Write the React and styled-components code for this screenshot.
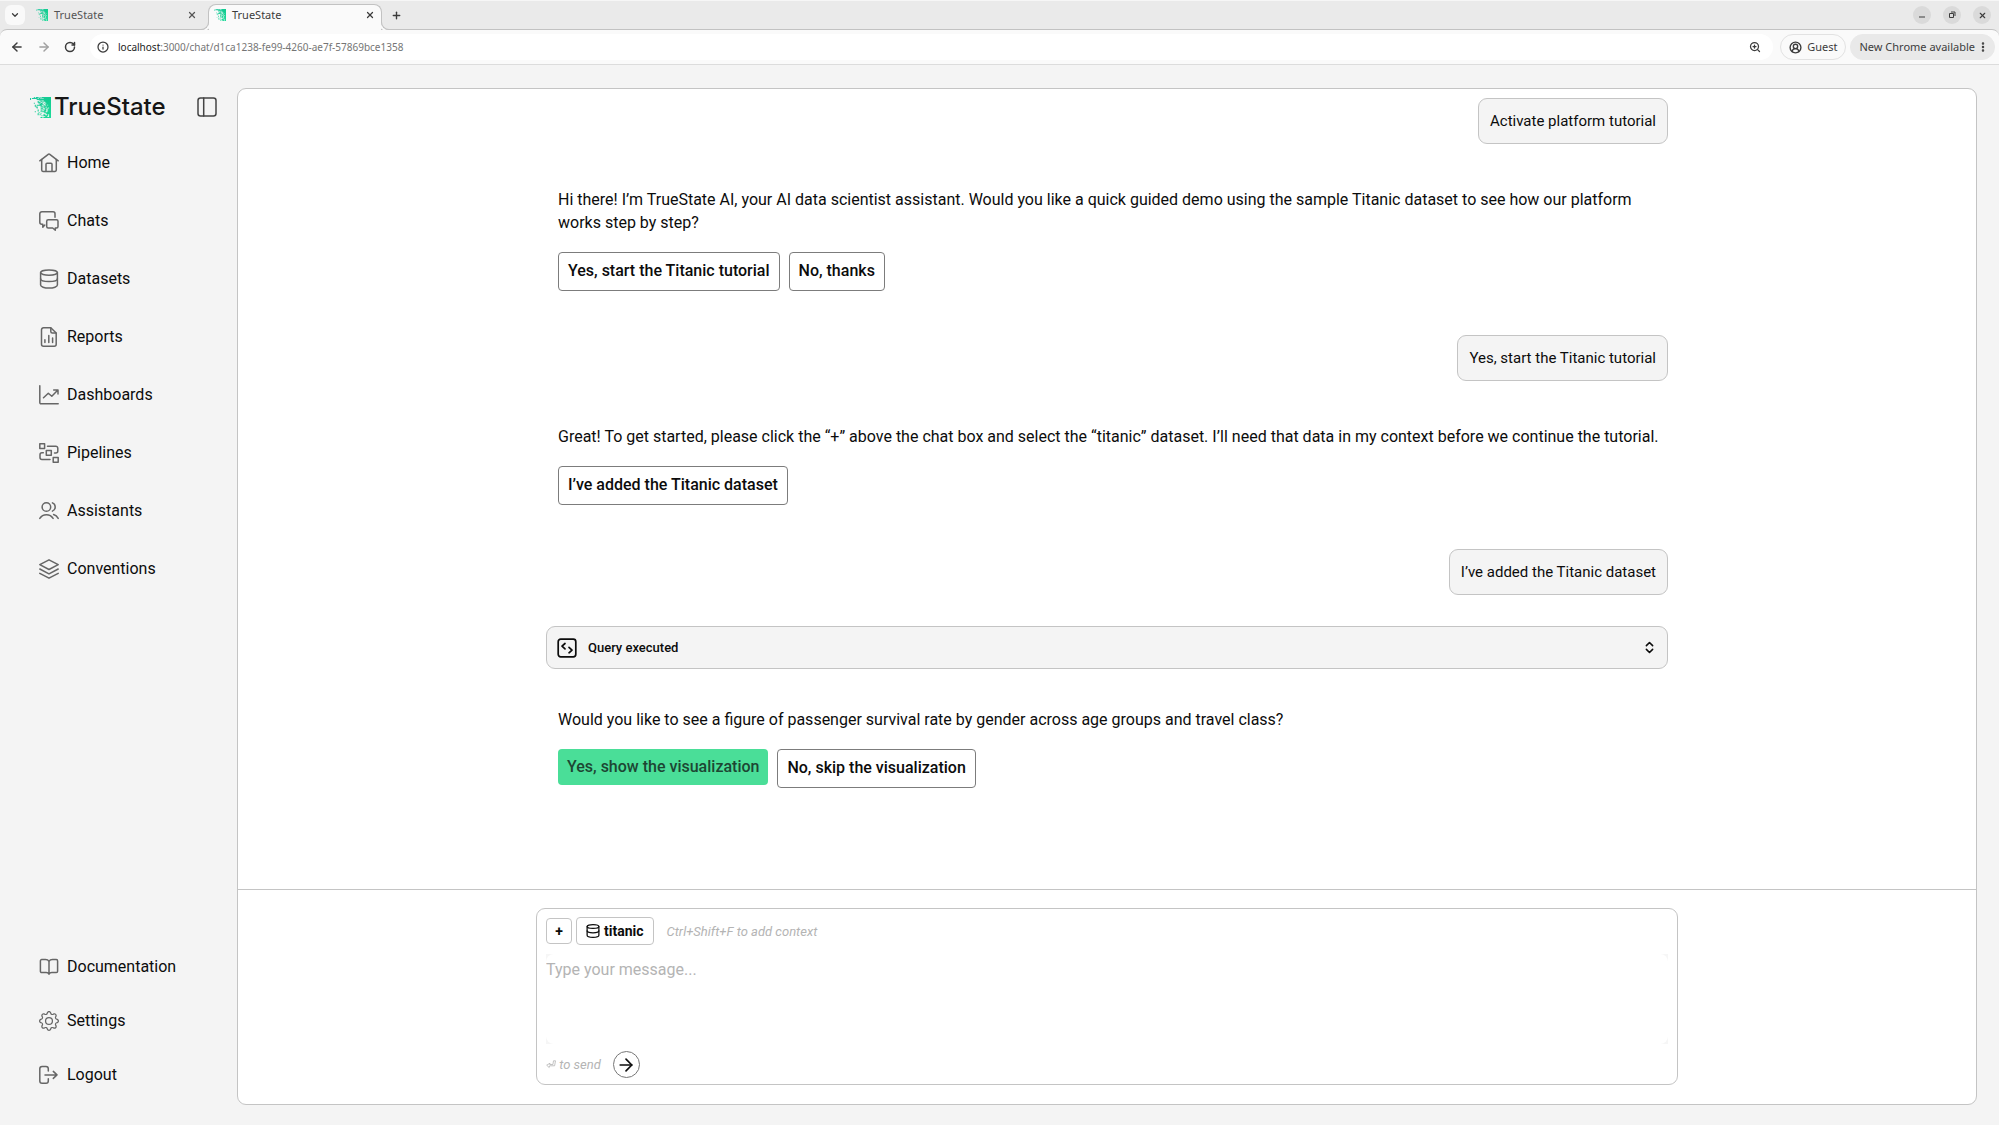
import React, { useState } from 'react'
import styled, { createGlobalStyle, css } from 'styled-components'
import {
  ArrowLeft,
  ArrowRight,
  ChevronDown,
  ChevronsUpDown,
  CircleUserRound,
  EllipsisVertical,
  Info,
  Plus,
  RotateCw,
  X,
  ZoomIn,
} from 'lucide-react'
import { BsGear } from 'react-icons/bs'

const GlobalStyle = createGlobalStyle`
  :root {
    --page: #f4f4f4;
    --panel: #fff;
    --line: #c4c4c4;
    --line-dark: #7c7c7c;
    --icon: #666;
    --muted: #b4b4b4;
    --green: #4ade98;
    --chrome: #eaeaea;
    --toolbar: #fafafa;
  }
  * {
    box-sizing: border-box;
  }
  body {
    margin: 0;
    background: var(--page);
    color: #0c0c0c;
    font-family: Roboto, 'Liberation Sans', sans-serif;
    font-size: 16px;
  }
  button,
  textarea,
  input {
    font: inherit;
    color: inherit;
  }
  button {
    cursor: pointer;
  }
`

const Screen = styled.div`
  min-height: 100vh;
  display: flex;
  flex-direction: column;
`

/* browser frame */

const Browser = styled.header`
  background: var(--chrome);
  border-top: 1px solid #f6f6f6;
  font-family: 'Noto Sans', 'Open Sans', sans-serif;
  color: #3c3c3c;
`

const TabStrip = styled.div`
  display: flex;
  align-items: flex-end;
  height: 28px;
  padding: 0 8px 0 5px;
`

const Plain = styled.button`
  display: flex;
  align-items: center;
  justify-content: center;
  flex: none;
  padding: 0;
  border: 0;
  background: none;
  &:disabled {
    color: #a0a0a0;
  }
`

const TabMenu = styled(Plain)`
  width: 20px;
  height: 20px;
  margin: 0 5px 4px 0;
  border-radius: 6px;
  background: #f9f9f9;
`

const Tab = styled.div`
  position: relative;
  display: flex;
  align-items: center;
  gap: 6px;
  width: 174px;
  height: 26px;
  padding: 0 6px 4px 5px;
  font-size: 11px;
  line-height: 16px;
  color: #555;
  border: 1px solid transparent;
  border-bottom: 0;
  ${Plain} {
    margin-left: auto;
  }
  ${props =>
    props.$active &&
    css`
      z-index: 1;
      margin: 0 0 -1px 4px;
      padding-bottom: 5px;
      background: var(--toolbar);
      border-color: #c2c2c2;
      border-radius: 8px 8px 0 0;
      color: #3c3c3c;
      &:before,
      &:after {
        content: '';
        position: absolute;
        bottom: 0;
        width: 8px;
        height: 8px;
        border: 0 solid #c2c2c2;
        border-bottom-width: 1px;
      }
      &:before {
        right: 100%;
        border-right-width: 1px;
        border-bottom-right-radius: 8px;
        box-shadow: 2px 1px 0 var(--toolbar);
      }
      &:after {
        left: 100%;
        border-left-width: 1px;
        border-bottom-left-radius: 8px;
        box-shadow: -2px 1px 0 var(--toolbar);
      }
    `}
`

const NewTab = styled(Plain)`
  margin: 0 0 8px 9px;
`

const WindowButtons = styled.div`
  display: flex;
  gap: 12px;
  margin: 0 0 5px auto;
  ${Plain} {
    width: 18px;
    height: 18px;
    border-radius: 50%;
    background: #dadada;
  }
`

const Toolbar = styled.div`
  display: flex;
  align-items: center;
  height: 36px;
  padding: 0 4px 0 10px;
  background: var(--toolbar);
  border: solid #c2c2c2;
  border-width: 1px 0 1px;
  border-bottom-color: #dcdcdc;
  border-radius: 7px 7px 0 0;
`

const History = styled.div`
  display: flex;
  gap: 13px;
  margin-right: 14px;
`

const AddressBar = styled.div`
  flex: 1;
  display: flex;
  align-items: center;
  height: 26px;
  margin-right: 7px;
  padding: 0 12px 0 7px;
  border-radius: 13px;
  background: #fff;
`

const Address = styled.p`
  flex: 1;
  margin: 0 0 0 9px;
  font-size: 10px;
  line-height: 16px;
  color: #757575;
  b {
    font-weight: 400;
    color: #1c1c1c;
  }
`

const Pill = styled.button`
  display: flex;
  align-items: center;
  gap: 5px;
  height: 26px;
  padding: 0 8px;
  border: 1px solid #e2e2e2;
  border-radius: 13px;
  background: transparent;
  font-size: 11px;
  line-height: 16px;
  ${props =>
    props.$filled &&
    css`
      gap: 2px;
      margin-left: 4px;
      padding-right: 5px;
      border-color: #e9e9e9;
      background: #e9e9e9;
    `}
`

/* sidebar */

const Body = styled.div`
  flex: 1;
  display: flex;
  padding: 23px 22px 20px 0;
`

const Sidebar = styled.aside`
  display: flex;
  flex-direction: column;
  flex: none;
  width: 237px;
  padding: 7px 20px 3px 30px;
`

const Brand = styled.div`
  display: flex;
  align-items: center;
  gap: 3px;
  height: 24px;
  font-family: Inter, 'Liberation Sans', sans-serif;
  font-size: 24px;
  font-weight: 500;
  line-height: 24px;
  color: #161616;
  ${Plain} {
    margin-left: auto;
    color: #444;
  }
`

const Nav = styled.nav`
  display: flex;
  flex-direction: column;
  margin-top: ${props => (props.$bottom ? 'auto' : '15px')};
`

const NavLink = styled.a`
  display: flex;
  align-items: center;
  gap: 8px;
  height: ${props => (props.$compact ? 54 : 58)}px;
  padding-left: 9px;
  line-height: 24px;
  color: inherit;
  text-decoration: none;
  svg {
    color: var(--icon);
  }
`

/* chat */

const Panel = styled.main`
  flex: 1;
  min-width: 0;
  display: flex;
  flex-direction: column;
  background: var(--panel);
  border: 1px solid var(--line);
  border-radius: 9px;
`

const Messages = styled.section`
  flex: 1;
  display: flex;
  flex-direction: column;
  width: 100%;
  max-width: 1122px;
  margin: 0 auto;
  padding: 9px 0;
`

const Bubble = styled.p`
  align-self: flex-end;
  margin: 0;
  padding: 11px;
  border: 1px solid var(--line);
  border-radius: 9px;
  background: var(--page);
  font-size: 15px;
  line-height: 22px;
`

const Reply = styled.div`
  padding: 44px 0 44px 12px;
  p {
    margin: 0 0 18px;
    line-height: 23px;
  }
`

const Choices = styled.div`
  display: flex;
  align-items: flex-start;
  gap: 9px;
`

const Choice = styled.button`
  padding: 6px 9px 8px;
  border: 1px solid var(--line-dark);
  border-radius: 4px;
  background: var(--panel);
  font-weight: 500;
  line-height: 23px;
  ${props =>
    props.$primary &&
    css`
      padding: 6px 9px 7px;
      border: 0;
      background: var(--green);
      color: #1d4633;
    `}
`

const QueryBar = styled.button`
  display: flex;
  align-items: center;
  gap: 11px;
  height: 43px;
  margin: 31px 0 -5px;
  padding: 0 10px;
  border: 1px solid var(--line);
  border-radius: 9px;
  background: var(--page);
  font-size: 13px;
  font-weight: 500;
  text-align: left;
  span {
    flex: 1;
  }
`

const Footer = styled.footer`
  padding: 18px 0 19px;
  border-top: 1px solid var(--line);
`

const Composer = styled.form`
  width: 100%;
  max-width: 1142px;
  margin: 0 auto;
  padding: 8px 9px 6px;
  border: 1px solid var(--line);
  border-radius: 9px;
`

const ContextRow = styled.div`
  display: flex;
  align-items: center;
  gap: 4px;
`

const Chip = styled.button`
  display: flex;
  align-items: center;
  justify-content: center;
  gap: 4px;
  min-width: 26px;
  height: ${props => (props.$wide ? 28 : 26)}px;
  padding: 0 ${props => (props.$wide ? 9 : 0)}px;
  border: 1px solid var(--line);
  border-radius: 4px;
  background: var(--panel);
  font-size: 14px;
  font-weight: 700;
`

const Hint = styled.span`
  margin-left: ${props => (props.$indent ? 9 : 0)}px;
  font-size: 13px;
  font-style: italic;
  color: var(--muted);
`

const InputWell = styled.div`
  margin-top: 9px;
  background: #f6f6f6;
  textarea {
    display: block;
    width: 100%;
    height: 90px;
    padding: 4px 0;
    border: 0;
    border-radius: 8px;
    outline: 0;
    resize: none;
    background: var(--panel);
    line-height: 24px;
  }
  textarea::placeholder {
    color: var(--muted);
    opacity: 1;
  }
`

const SendRow = styled.div`
  display: flex;
  align-items: center;
  gap: 12px;
  margin-top: 7px;
`

const Send = styled(Plain)`
  width: 27px;
  height: 27px;
  border: 1px solid #777;
  border-radius: 50%;
`

/* drawings */

const Glyph = ({ size = 20, children, stroke = 1.5 }) => (
  <svg
    width={size}
    height={size}
    viewBox="0 0 20 20"
    fill="none"
    stroke="currentColor"
    strokeWidth={stroke}
    strokeLinecap="round"
    strokeLinejoin="round"
    aria-hidden="true"
  >
    {children}
  </svg>
)

const HomeIcon = () => (
  <Glyph>
    <path d="M.8 7.8 9.2 1.4a1.3 1.3 0 0 1 1.6 0l8.4 6.4" />
    <path d="M2.7 6.6V17A1.4 1.4 0 0 0 4 18.4h12a1.4 1.4 0 0 0 1.3-1.4V6.6" />
    <path d="M7 18.2v-7a1 1 0 0 1 1-1h4a1 1 0 0 1 1 1v7" />
  </Glyph>
)

const ChatsIcon = () => (
  <Glyph>
    <path d="M16 6.200V2.800a2 2 0 0 0-2-2H2.800a2 2 0 0 0-2 2v8.500a2 2 0 0 0 2 2h1v3l2-2.200" />
    <path d="M9.200 8.700h8.300A1.500 1.500 0 0 1 19 10.200v5.300a1.500 1.500 0 0 1-1.500 1.500h-1.200v2.200L13.700 17H9.200a1.500 1.500 0 0 1-1.500-1.500v-5.300a1.500 1.500 0 0 1 1.500-1.500Z" />
  </Glyph>
)

const DatabaseIcon = ({ size, stroke }) => (
  <Glyph size={size} stroke={stroke}>
    <ellipse cx="10" cy="3.6" rx="8.4" ry="2.7" />
    <path d="M1.600 3.600v12.500c0 1.600 3.700 3 8.400 3s8.400-1.400 8.400-3V3.600" />
    <path d="M1.600 9.800c0 1.600 3.700 2.800 8.400 2.800s8.400-1.200 8.400-2.800" />
  </Glyph>
)

const ReportsIcon = () => (
  <Glyph>
    <path d="M11.8.8H4.500a2 2 0 0 0-2 2v14.400a2 2 0 0 0 2 2h10.700a2 2 0 0 0 2-2V6Z" />
    <path d="M11.8 1v3.500A1.500 1.500 0 0 0 13.300 6H17" />
    <path d="M5.900 12.800v2.800M9.800 8.600v7M13.600 11v4.600" />
  </Glyph>
)

const DashboardsIcon = () => (
  <Glyph>
    <path d="M.8.8v16.800A1.200 1.200 0 0 0 2 18.800h17.200" />
    <path d="m4.500 12.800 4.800-4.600 3.500 3L18.900 5M14.700 5H19v4" />
  </Glyph>
)

const PipelinesIcon = () => (
  <Glyph>
    <rect x=".8" y=".8" width="4.800" height="4.800" />
    <rect x="7.300" y="7.400" width="5" height="4.800" />
    <rect x="14.200" y="14.400" width="5" height="4.800" />
    <path d="M8.500 3.200h8.300a2 2 0 0 1 2 2V8a2 2 0 0 1-2 2h-1.300" />
    <path d="M4.300 9.800H3a2 2 0 0 0-2 2v2.800a2 2 0 0 0 2 2h8" />
  </Glyph>
)

const AssistantsIcon = () => (
  <Glyph>
    <circle cx="7.400" cy="6" r="4.300" />
    <path d="M13.400 1.900a4.400 4.400 0 0 1 0 8.200" />
    <path d="M.8 17.400c3-5 10.300-5 13.300 0M14.600 13.600c2 .5 3.500 1.700 4.600 3.800" />
  </Glyph>
)

const ConventionsIcon = () => (
  <Glyph>
    <path d="m10 .8 9.200 4.800-9.200 4.900L.8 5.600Z" />
    <path d="m.8 10 9.200 4.900 9.200-4.900M.8 14.400l9.200 4.800 9.200-4.800" />
  </Glyph>
)

const BookIcon = () => (
  <Glyph>
    <path d="M10 4.300C9.200 3 7.800 2.600 6.500 2.600H2.700a1.300 1.300 0 0 0-1.300 1.300v10.400a1.300 1.300 0 0 0 1.300 1.300h4.500c1.500 0 2.300.5 2.800 1.600.5-1.100 1.300-1.600 2.800-1.600h4.500a1.300 1.300 0 0 0 1.300-1.300V3.900a1.300 1.300 0 0 0-1.300-1.300h-3.800c-1.300 0-2.700.4-3.500 1.700Zm0 0v13" />
  </Glyph>
)

const LogoutIcon = () => (
  <Glyph>
    <path d="M9.300 6V3.700A2.300 2.300 0 0 0 7 1.400H3.100A2.300 2.300 0 0 0 .8 3.700v12.200a2.300 2.300 0 0 0 2.300 2.300H7a2.300 2.300 0 0 0 2.300-2.300v-2.100" />
    <path d="M6 9.900h12M14.300 6.400 18 9.900l-3.700 3.500" />
  </Glyph>
)

const GearIcon = () => <BsGear size={20} />

const SidebarIcon = () => (
  <Glyph>
    <rect x="1" y="1" width="18" height="18" rx="2.500" />
    <path d="M6.700 1v18" />
  </Glyph>
)

const CodeIcon = () => (
  <Glyph stroke={1.7}>
    <rect x="1.200" y="1.200" width="17.600" height="17.600" rx="2.500" />
    <path d="M8 5.500 5 8.200l3 2.700M12 9.300l3 2.800-3 2.700" />
  </Glyph>
)

const ReturnIcon = () => (
  <svg width="10" height="9" viewBox="0 0 10 9" fill="none" stroke="currentColor">
    <path
      d="M7.500.8h2L8.600 5.800h-5l-.4 1.700L.7 5.200l3.300-2-.3 1.300h3.200Z"
      strokeWidth=".8"
    />
  </svg>
)

// integer hash, so the specks fall the same way every time
const noise = (x, y) => {
  let n = Math.imul(x + 17, 374761393) + Math.imul(y + 5, 668265263)
  n = Math.imul(n ^ (n >>> 13), 1274126177)
  return ((n ^ (n >>> 16)) >>> 0) / 4294967296
}

// green square that breaks into specks towards the lower left
const specks = []
for (let y = 0; y < 22; y++) {
  for (let x = 0; x < 22; x++) {
    const density = x > 19 ? 1 : x / 19 - y / 60 + (y < 3 ? 0.15 : 0.02)
    if (noise(x, y) < density) specks.push([x, y])
  }
}

const Mark = ({ size }) => (
  <svg width={size} height={size} viewBox="0 0 22 22" aria-hidden="true">
    <defs>
      <linearGradient id={`mark${size}`} x1="0" y1="0" x2="1" y2="1">
        <stop offset="0" stopColor="#22c9a4" />
        <stop offset=".5" stopColor="#12cc90" />
        <stop offset="1" stopColor="#1edc9a" />
      </linearGradient>
    </defs>
    <path
      fill={`url(#mark${size})`}
      d={specks.map(([x, y]) => `M${x} ${y}h1.1v1.1h-1.1z`).join('')}
    />
  </svg>
)

const mainLinks = [
  ['Home', HomeIcon],
  ['Chats', ChatsIcon],
  ['Datasets', DatabaseIcon],
  ['Reports', ReportsIcon],
  ['Dashboards', DashboardsIcon],
  ['Pipelines', PipelinesIcon],
  ['Assistants', AssistantsIcon],
  ['Conventions', ConventionsIcon],
]

const bottomLinks = [
  ['Documentation', BookIcon],
  ['Settings', GearIcon],
  ['Logout', LogoutIcon],
]

const BrowserFrame = () => (
  <Browser>
    <TabStrip>
      <TabMenu aria-label="Search tabs">
        <ChevronDown size={10} strokeWidth={3} />
      </TabMenu>
      <Tab>
        <Mark size={12} />
        TrueState
        <Plain aria-label="Close tab">
          <X size={10} strokeWidth={3} />
        </Plain>
      </Tab>
      <Tab $active>
        <Mark size={12} />
        TrueState
        <Plain aria-label="Close tab">
          <X size={10} strokeWidth={3} />
        </Plain>
      </Tab>
      <NewTab aria-label="New tab">
        <Plus size={11} strokeWidth={3} />
      </NewTab>
      <WindowButtons>
        <Plain aria-label="Minimize">
          <svg width="8" height="8" viewBox="0 0 8 8" stroke="currentColor">
            <path d="M1 6h6" />
          </svg>
        </Plain>
        <Plain aria-label="Restore">
          <svg width="8" height="8" viewBox="0 0 8 8" fill="none" stroke="currentColor">
            <path d="M1.500 2.500h4v4h-4zM3 1h4v4" />
          </svg>
        </Plain>
        <Plain aria-label="Close window">
          <X size={9} strokeWidth={3} />
        </Plain>
      </WindowButtons>
    </TabStrip>
    <Toolbar>
      <History>
        <Plain aria-label="Back">
          <ArrowLeft size={14} strokeWidth={2.5} />
        </Plain>
        <Plain aria-label="Forward" disabled>
          <ArrowRight size={14} strokeWidth={2.5} />
        </Plain>
        <Plain aria-label="Reload">
          <RotateCw size={12} strokeWidth={3} />
        </Plain>
      </History>
      <AddressBar>
        <Info size={12} strokeWidth={2.5} />
        <Address>
          <b>localhost</b>:3000/chat/d1ca1238-fe99-4260-ae7f-57869bce1358
        </Address>
        <Plain aria-label="Zoom">
          <ZoomIn size={12} strokeWidth={2.5} />
        </Plain>
      </AddressBar>
      <Pill>
        <CircleUserRound size={13} strokeWidth={2.5} />
        Guest
      </Pill>
      <Pill $filled>
        New Chrome available
        <EllipsisVertical size={12} strokeWidth={3} />
      </Pill>
    </Toolbar>
  </Browser>
)

const SideNav = () => (
  <Sidebar>
    <Brand>
      <Mark size={21} />
      TrueState
      <Plain aria-label="Toggle sidebar">
        <SidebarIcon />
      </Plain>
    </Brand>
    <Nav>
      {mainLinks.map(([label, Icon]) => (
        <NavLink key={label} href="#">
          <Icon />
          {label}
        </NavLink>
      ))}
    </Nav>
    <Nav $bottom>
      {bottomLinks.map(([label, Icon]) => (
        <NavLink key={label} href="#" $compact>
          <Icon />
          {label}
        </NavLink>
      ))}
    </Nav>
  </Sidebar>
)

export default function App() {
  const [message, setMessage] = useState('')

  return (
    <>
      <GlobalStyle />
      <Screen>
        <BrowserFrame />
        <Body>
          <SideNav />
          <Panel>
            <Messages>
              <Bubble>Activate platform tutorial</Bubble>
              <Reply>
                <p>
                  Hi there! I’m TrueState AI, your AI data scientist assistant. Would you
                  like a quick guided demo using the sample Titanic dataset to see how our
                  platform works step by step?
                </p>
                <Choices>
                  <Choice>Yes, start the Titanic tutorial</Choice>
                  <Choice>No, thanks</Choice>
                </Choices>
              </Reply>
              <Bubble>Yes, start the Titanic tutorial</Bubble>
              <Reply>
                <p>
                  Great! To get started, please click the “+” above the chat box and select
                  the “titanic” dataset. I’ll need that data in my context before we
                  continue the tutorial.
                </p>
                <Choices>
                  <Choice>I’ve added the Titanic dataset</Choice>
                </Choices>
              </Reply>
              <Bubble>I’ve added the Titanic dataset</Bubble>
              <QueryBar>
                <CodeIcon />
                <span>Query executed</span>
                <ChevronsUpDown size={15} strokeWidth={2.5} />
              </QueryBar>
              <Reply>
                <p>
                  Would you like to see a figure of passenger survival rate by gender
                  across age groups and travel class?
                </p>
                <Choices>
                  <Choice $primary>Yes, show the visualization</Choice>
                  <Choice>No, skip the visualization</Choice>
                </Choices>
              </Reply>
            </Messages>
            <Footer>
              <Composer onSubmit={e => e.preventDefault()}>
                <ContextRow>
                  <Chip type="button" aria-label="Add context">
                    +
                  </Chip>
                  <Chip type="button" $wide>
                    <DatabaseIcon size={14} stroke={1.8} />
                    titanic
                  </Chip>
                  <Hint $indent>Ctrl+Shift+F to add context</Hint>
                </ContextRow>
                <InputWell>
                  <textarea
                    aria-label="Message"
                    placeholder="Type your message..."
                    value={message}
                    onChange={e => setMessage(e.target.value)}
                  />
                </InputWell>
                <SendRow>
                  <Hint>
                    <ReturnIcon /> to send
                  </Hint>
                  <Send type="submit" aria-label="Send">
                    <ArrowRight size={20} strokeWidth={2} />
                  </Send>
                </SendRow>
              </Composer>
            </Footer>
          </Panel>
        </Body>
      </Screen>
    </>
  )
}
